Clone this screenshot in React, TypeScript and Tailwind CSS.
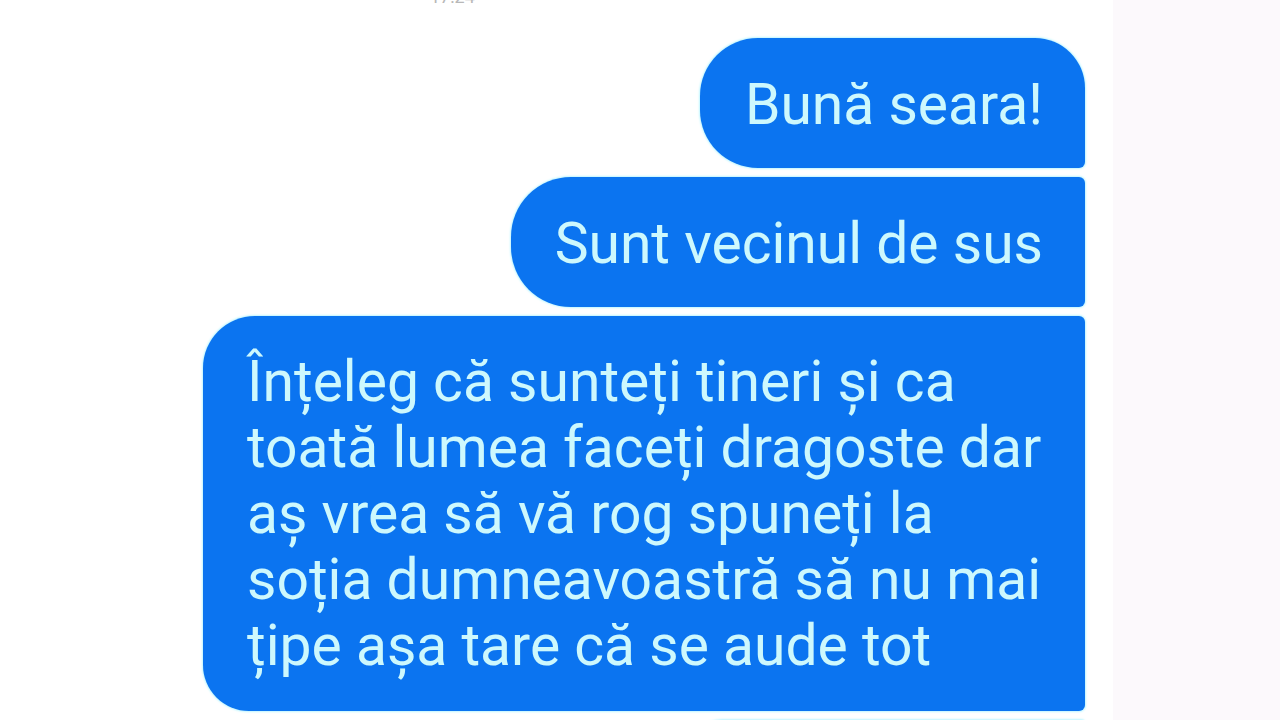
const lines = [
    "Înțeleg că sunteți tineri și ca",
    "toată lumea faceți dragoste dar",
    "aș vrea să vă rog spuneți la",
    "soția dumneavoastră să nu mai",
    "țipe așa tare că se aude tot",
];

const bubble =
    "bg-[#0b74f0] text-[#cdf8fd] text-[57px] leading-[66px] whitespace-nowrap py-8 shadow-[0_0_2px_1px_#bff6ff]";

export default function App() {
    return (
        <div className="flex h-[720px] w-full overflow-hidden bg-white font-['Roboto',sans-serif]">
            <div className="flex w-[1113px] shrink-0 flex-col items-end pr-[28px]">
                {/* timestamp, mostly scrolled off the top */}
                <div className="-mt-[12px] h-[18px] w-full pl-[430px] text-[18px] leading-[18px] text-[#b8b8b8]">
                    17:24
                </div>

                <div className="mt-[32px] flex flex-col items-end gap-[9px]">
                    <div className={`${bubble} rounded-l-[58px] rounded-tr-[50px] rounded-br-[6px] pl-[45px] pr-[42px] pt-[34px] pb-[30px]`}>
                        Bună seara!
                    </div>
                    <div className={`${bubble} rounded-l-[60px] rounded-r-[6px] pl-[44px] pr-[42px] pt-[34px] pb-[30px]`}>
                        Sunt vecinul de sus
                    </div>
                    <div className={`${bubble} w-[882px] rounded-tl-[52px] rounded-bl-[46px] rounded-r-[6px] pl-[44px] pr-[40px] pt-[33px] pb-[32px]`}>
                        {lines.map((l) => (
                            <div key={l}>{l}</div>
                        ))}
                    </div>
                    <div className={`${bubble} h-[60px] w-[395px] rounded-l-[50px] rounded-r-[6px]`} />
                </div>
            </div>
            <div className="flex-1 bg-[#fcf9fc]" />
        </div>
    );
}
